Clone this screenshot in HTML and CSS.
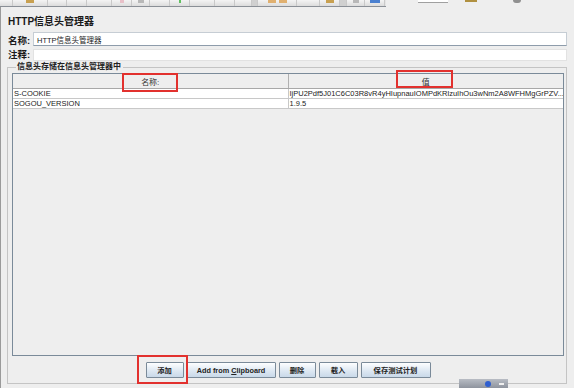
FILE: index.html
```html
<!DOCTYPE html>
<html>
<head>
    <title>HTTP信息头管理器</title>
    <link rel="stylesheet" href="styles.css">
</head>
<body>
    <div class="toolbar">
        <div class="tool-buttons">
            <span class="tool w13"></span>
            <span class="tool w35"><i class="ico gold"></i></span>
            <span class="tool w19"></span>
            <span class="tool w20"></span>
            <span class="tool w25"></span>
            <span class="tool w20"><i class="ico pink"></i></span>
            <span class="tool w18"><i class="ico grey"></i></span>
            <span class="tool w20"></span>
            <span class="tool w20"><i class="ico green"></i></span>
            <span class="tool w25"></span>
            <span class="tool w20"></span>
            <span class="tool w17"></span>
            <span class="tool w6 dark"></span>
            <span class="tool w39"><i class="ico orange"></i><i class="ico orange"></i></span>
            <span class="tool w23"></span>
            <span class="tool w20"><i class="ico gold"></i></span>
            <span class="tool w7 dark"></span>
            <span class="tool w18"><i class="ico grey"></i></span>
            <span class="tool w20"><i class="ico blue"></i></span>
        </div>
        <div class="tool-extra">
            <span class="search-box"></span>
            <span class="gold-chip"></span>
            <span class="round-chip"></span>
        </div>
    </div>

    <div class="main">
        <h1 class="title">HTTP信息头管理器</h1>

        <div class="field-row">
            <label class="field-label">名称:</label>
            <input class="field-input name-input" type="text" value="HTTP信息头管理器">
        </div>
        <div class="field-row">
            <label class="field-label">注释:</label>
            <input class="field-input comment-input" type="text" value="">
        </div>

        <fieldset class="group">
            <legend class="group-title">信息头存储在信息头管理器中</legend>
            <div class="table-pane">
                <table class="header-table">
                    <tr>
                        <th>名称:</th>
                        <th>值</th>
                    </tr>
                    <tr>
                        <td>S-COOKIE</td>
                        <td>IjPU2Pdf5J01C6C03R8vR4yHIupnauIOMPdKRlzuIhOu3wNm2A8WFHMgGrPZV...</td>
                    </tr>
                    <tr>
                        <td>SOGOU_VERSION</td>
                        <td>1.9.5</td>
                    </tr>
                </table>
            </div>
            <div class="button-bar">
                <button class="btn btn-add">添加</button>
                <button class="btn btn-clip">Add from <u>C</u>lipboard</button>
                <button class="btn btn-del">删除</button>
                <button class="btn btn-load">载入</button>
                <button class="btn btn-save">保存测试计划</button>
            </div>
        </fieldset>
    </div>

    <!-- annotation boxes drawn over the screenshot -->
    <div class="mark mark-name"></div>
    <div class="mark mark-value"></div>
    <div class="mark mark-add"></div>

    <div class="tray">
        <span class="tray-dot"></span>
        <span class="tray-dash"></span>
    </div>
</body>
</html>
```

FILE: styles.css
```css
body {
    margin: 0;
    background-color: #eeeeee;
    font-family: "Liberation Sans", "Noto Sans CJK SC", sans-serif;
    color: #222;
    width: 574px;
    height: 388px;
    overflow: hidden;
    position: relative;
}

/* top toolbar strip (cut off) */
.toolbar {
    display: flex;
    height: 7px;
}
.tool-buttons {
    display: flex;
    width: 386px;
    height: 6px;
    border-bottom: 1px solid #8a8f96;
    background-color: #e4e4e4;
}
.tool {
    height: 6px;
    border-right: 1px solid #c9c9c9;
    box-sizing: border-box;
    background: linear-gradient(#f4f4f4, #dcdcdc);
    display: flex;
    justify-content: center;
    gap: 3px;
}
.tool.dark {
    background: #d0d0d0;
}
.w6 { width: 6px; }
.w7 { width: 7px; }
.w13 { width: 13px; }
.w17 { width: 17px; }
.w18 { width: 18px; }
.w19 { width: 19px; }
.w20 { width: 20px; }
.w23 { width: 23px; }
.w25 { width: 25px; }
.w35 { width: 35px; }
.w39 { width: 39px; }
.ico {
    display: block;
    width: 8px;
    height: 3px;
}
.ico.gold { background: #c8a050; }
.ico.pink { background: #e8c0c8; width: 4px; }
.ico.grey { background: #b8b8b8; width: 6px; }
.ico.green { background: #60c060; width: 2px; }
.ico.orange { background: #e0b070; }
.ico.blue { background: #4a80d0; width: 10px; }

.tool-extra {
    flex: 1;
    position: relative;
}
.search-box {
    position: absolute;
    left: 32px;
    top: 0;
    width: 30px;
    height: 2px;
    background: #fff;
    border-bottom: 1px solid #a0a0a0;
}
.gold-chip {
    position: absolute;
    left: 79px;
    top: 0;
    width: 12px;
    height: 2px;
    background: #b09040;
}
.round-chip {
    position: absolute;
    left: 127px;
    top: 0;
    width: 8px;
    height: 3px;
    border-radius: 0 0 4px 4px;
    background: #909090;
}

/* main panel */
.main {
    border-left: 1px solid #9a9a9a;
    padding: 0 7px 0 6px;
    height: 381px;
}
.title {
    margin: 0;
    padding: 6px 0 0 1px;
    font-size: 10px;
    line-height: 18px;
    height: 25px;
    box-sizing: border-box;
    color: #1a1a1a;
}
.field-row {
    display: flex;
    align-items: center;
    padding-left: 1px;
}
.field-label {
    width: 25px;
    font-size: 9.5px;
    line-height: 12px;
    font-weight: bold;
    color: #1a1a1a;
}
.field-input {
    flex: 1;
    margin: 0;
    padding: 0 3px;
    font-family: inherit;
    font-size: 7.5px;
    color: #222;
    background: #fff;
    box-sizing: border-box;
    outline: none;
}
.name-input {
    height: 14px;
    border: 1px solid #c6cdd4;
    border-bottom-color: #8e9cab;
    margin-bottom: 3px;
}
.comment-input {
    height: 12px;
    border: 1px solid #e2e2e2;
}

/* header table group */
.group {
    margin: 2px 0 0 0;
    padding: 2px 2px 5px 4px;
    border: 1px solid #c4c4c4;
    min-width: 0;
}
.group-title {
    margin-left: 4px;
    padding: 0 2px 0 1px;
    font-size: 8px;
    line-height: 8px;
    font-weight: bold;
    color: #222;
}
.table-pane {
    height: 281px;
    border: 1px solid #7a8a99;
    background: #eeeeee;
    overflow: hidden;
}
.header-table {
    width: 100%;
    border-collapse: collapse;
    table-layout: fixed;
}
.header-table th {
    height: 14px;
    padding: 0;
    font-size: 8px;
    font-weight: normal;
    text-align: center;
    color: #333;
    background: #eeeeee;
    border-right: 1px solid #b0b0b0;
    border-bottom: 1px solid #a8a8a8;
}
.header-table th:last-child {
    border-right: none;
}
.header-table td {
    height: 9px;
    padding: 0 1px;
    font-size: 7.5px;
    line-height: 9px;
    color: #222;
    background: #fff;
    white-space: nowrap;
    overflow: hidden;
    border-right: 1px solid #c8c8c8;
    border-bottom: 1px solid #c8c8c8;
}
.header-table td:last-child {
    border-right: none;
}
.button-bar {
    display: flex;
    justify-content: center;
    gap: 3px;
    margin-top: 6px;
}
.btn {
    height: 16px;
    padding: 0;
    font-family: inherit;
    font-size: 7.3px;
    font-weight: bold;
    color: #222;
    border: 1px solid #7a8a99;
    border-radius: 1px;
    background: linear-gradient(#fdfeff, #dbe6f1 60%, #c9d9e9);
}
.btn-add { width: 38px; }
.btn-clip { width: 89px; }
.btn-del { width: 37px; }
.btn-load { width: 39px; }
.btn-save { width: 70px; }
.btn u {
    text-decoration: underline;
}

/* red annotation boxes */
.mark {
    position: absolute;
    border: 2px solid #e2312e;
    box-sizing: border-box;
}
.mark-name {
    left: 122px;
    top: 73px;
    width: 56px;
    height: 19px;
}
.mark-value {
    left: 396px;
    top: 70px;
    width: 57px;
    height: 18px;
}
.mark-add {
    left: 137px;
    top: 355px;
    width: 51px;
    height: 29px;
}

/* taskbar fragment at the bottom edge */
.tray {
    position: absolute;
    left: 459px;
    top: 379px;
    width: 49px;
    height: 9px;
    background: linear-gradient(#b8bcc4, #8e949e);
    display: flex;
    align-items: center;
    gap: 8px;
    padding-left: 26px;
    box-sizing: border-box;
}
.tray-dot {
    width: 6px;
    height: 6px;
    border-radius: 50%;
    background: #2f5fd0;
}
.tray-dash {
    width: 5px;
    height: 2px;
    background: #f0f0f0;
}
```
